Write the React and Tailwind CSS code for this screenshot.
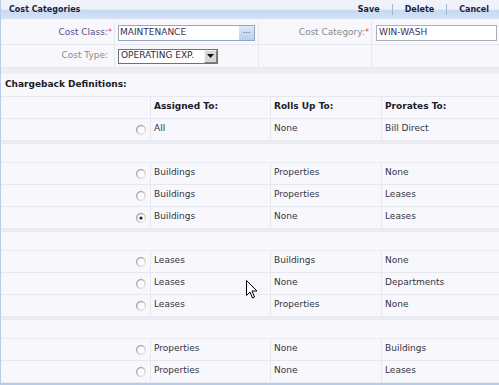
import React from 'react';

const rows = [
    { type: 'row', a: 'All', r: 'None', p: 'Bill Direct' },
    { type: 'gap' },
    { type: 'row', a: 'Buildings', r: 'Properties', p: 'None' },
    { type: 'row', a: 'Buildings', r: 'Properties', p: 'Leases' },
    { type: 'row', a: 'Buildings', r: 'None', p: 'Leases', checked: true },
    { type: 'gap' },
    { type: 'row', a: 'Leases', r: 'Buildings', p: 'None' },
    { type: 'row', a: 'Leases', r: 'None', p: 'Departments' },
    { type: 'row', a: 'Leases', r: 'Properties', p: 'None' },
    { type: 'gap' },
    { type: 'row', a: 'Properties', r: 'None', p: 'Buildings' },
    { type: 'row', a: 'Properties', r: 'None', p: 'Leases' },
];

const Radio = ({ checked }) => (
    <svg width="10" height="10" viewBox="0 0 10 10">
        <defs>
            <linearGradient id="rg" x1="0" y1="0" x2="1" y2="1">
                <stop offset="0" stopColor="#8a8a8a" />
                <stop offset="0.6" stopColor="#c8c8c8" />
                <stop offset="1" stopColor="#f0f0f0" />
            </linearGradient>
        </defs>
        <circle cx="5" cy="5" r="4.3" fill="#fbfbfb" stroke="url(#rg)" strokeWidth="1.3" />
        {checked && <circle cx="5" cy="5" r="1.6" fill="#222" />}
    </svg>
);

const Req = () => <span className="text-[#e0502a] align-top text-[8px]">*</span>;

export default function App() {
    return (
        <div className="relative w-[499px] h-[385px] overflow-hidden bg-[#f8f8fc] font-['DejaVu_Sans',sans-serif] text-[9px] text-[#333340] border-l border-b-2 border-[#b9cde8]">
            {/* Title bar */}
            <div className="h-[19px] flex items-center justify-between bg-[linear-gradient(#f0f3f9_0%,#eef2f8_48%,#c8daf2_55%,#d3e1f4_100%)] text-[#1e1e40] font-bold text-[8px]">
                <span className="pl-[8px]">Cost Categories</span>
                <div className="flex items-center pr-[10px]">
                    <span className="px-[12px]">Save</span>
                    <span className="w-px h-[11px] bg-[#9fb6d6]" />
                    <span className="px-[12px]">Delete</span>
                    <span className="w-px h-[11px] bg-[#9fb6d6]" />
                    <span className="pl-[12px]">Cancel</span>
                </div>
            </div>

            {/* Form */}
            <div className="mt-[3px]">
                <div className="flex h-[23px] border-b border-[#e6e8ef]">
                    <div className="w-[114px] border-r border-[#e6e8ef] flex items-center justify-end pr-[2px] text-[#5a4e8c]">
                        Cost Class:<Req />
                    </div>
                    <div className="w-[144px] border-r border-[#e6e8ef] flex items-center pl-[3px]">
                        <div className="w-[137px] h-[16px] border border-[#8fa6c4] bg-white flex items-center justify-between pl-[1px]">
                            <span className="text-[#3a2f5a]">MAINTENANCE</span>
                            <span className="w-[15px] h-[14px] bg-[linear-gradient(#dfe9f7,#b9cfee)] text-[#444] text-[8px] leading-[10px] text-center">...</span>
                        </div>
                    </div>
                    <div className="w-[113px] border-r border-[#e6e8ef] flex items-center justify-end pr-[2px] text-[#8a8a8a]">
                        Cost Category:<Req />
                    </div>
                    <div className="flex-1 flex items-center pl-[4px]">
                        <div className="w-[121px] h-[16px] border border-[#a8b0ba] bg-white flex items-center pl-[2px] text-[#3a2f5a]">
                            WIN-WASH
                        </div>
                    </div>
                </div>
                <div className="flex h-[23px] border-b border-[#e6e8ef]">
                    <div className="w-[114px] border-r border-[#e6e8ef] flex items-center justify-end pr-[6px] text-[#8a8a8a]">
                        Cost Type:
                    </div>
                    <div className="w-[144px] border-r border-[#e6e8ef] flex items-center pl-[3px]">
                        <div className="w-[100px] h-[15px] border border-[#707070] bg-white flex items-center justify-between pl-[2px]">
                            <span className="text-[#2c2c3a]">OPERATING EXP.</span>
                            <span className="w-[13px] h-[13px] bg-[#d6d6d6] border border-[#f4f4f4] border-r-[#808080] border-b-[#808080] flex items-center justify-center">
                                <svg width="7" height="4" viewBox="0 0 7 4"><path d="M0 0h7L3.5 4z" fill="#111" /></svg>
                            </span>
                        </div>
                    </div>
                    <div className="w-[113px] border-r border-[#e6e8ef]" />
                    <div className="flex-1" />
                </div>
            </div>

            <div className="h-[6px] bg-[#eceef3]" />

            <div className="h-[22px] flex items-center pl-[4px] font-bold text-[#1a1a2a]">Chargeback Definitions:</div>

            {/* Table */}
            <div className="grid grid-cols-[150px_120px_111px_1fr] h-[23px] border-t border-b border-[#e6e8ef] font-bold text-[#1a1a2a]">
                <div className="border-r border-[#e6e8ef]" />
                <div className="border-r border-[#e6e8ef] pl-[3px] pt-[3px]">Assigned To:</div>
                <div className="border-r border-[#e6e8ef] pl-[3px] pt-[3px]">Rolls Up To:</div>
                <div className="pl-[3px] pt-[3px]">Prorates To:</div>
            </div>
            {rows.map((row, i) =>
                row.type === 'gap' ? (
                    <div key={i} className="h-[22px] border-t-[3px] border-b border-[#eaecf1]" />
                ) : (
                    <div key={i} className="grid grid-cols-[150px_120px_111px_1fr] h-[22px] border-b border-[#e6e8ef]">
                        <div className="border-r border-[#e6e8ef] flex justify-end items-start pr-[4px] pt-[6px]">
                            <Radio checked={row.checked} />
                        </div>
                        <div className="border-r border-[#e6e8ef] pl-[3px] pt-[3px]">{row.a}</div>
                        <div className="border-r border-[#e6e8ef] pl-[3px] pt-[3px]">{row.r}</div>
                        <div className="pl-[3px] pt-[3px]">{row.p}</div>
                    </div>
                )
            )}

            {/* Mouse pointer */}
            <svg className="absolute left-[245px] top-[280px]" width="12" height="19" viewBox="0 0 12 19">
                <path d="M0.5 0.5v15l3.5-3.5 2.5 6 2-1-2.5-6h5z" fill="#fff" stroke="#000" strokeWidth="1" />
            </svg>
        </div>
    );
}
